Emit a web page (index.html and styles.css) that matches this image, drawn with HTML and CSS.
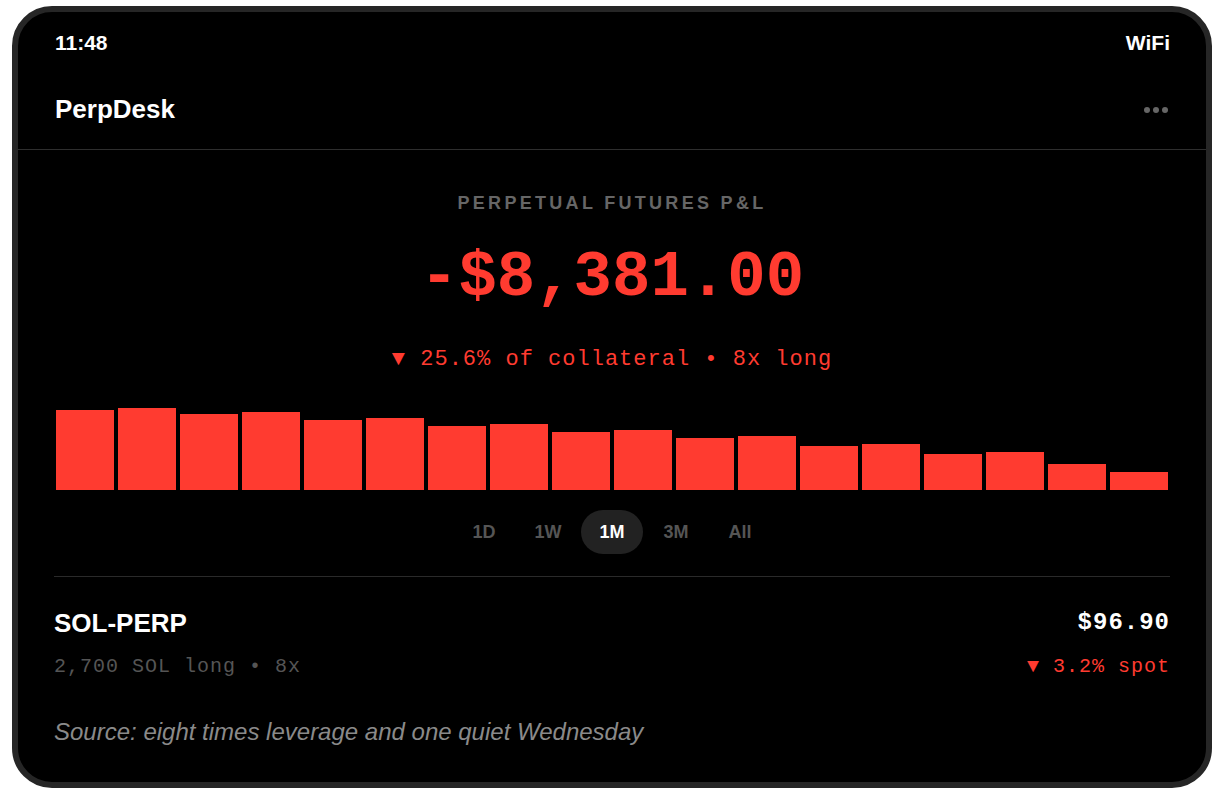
FILE: index.html
```html
<!DOCTYPE html>
<html lang="en">
<head>
    <meta charset="UTF-8">
    <meta name="viewport" content="width=device-width, initial-scale=1.0">
    <title>PerpDesk</title>
    <link rel="stylesheet" href="styles.css">
</head>
<body>
    <div class="device">
        <div class="status-bar">
            <span>11:48</span>
            <span>WiFi</span>
        </div>

        <header class="app-header">
            <h1>PerpDesk</h1>
            <div class="more" aria-label="More">
                <span></span><span></span><span></span>
            </div>
        </header>

        <main class="content">
            <section class="pnl">
                <div class="pnl-label">PERPETUAL FUTURES P&amp;L</div>
                <div class="pnl-value">-$8,381.00</div>
                <div class="pnl-sub">▼ 25.6% of collateral • 8x long</div>
            </section>

            <div class="chart">
                <div class="bar" style="height: 80px"></div>
                <div class="bar" style="height: 82px"></div>
                <div class="bar" style="height: 76px"></div>
                <div class="bar" style="height: 78px"></div>
                <div class="bar" style="height: 70px"></div>
                <div class="bar" style="height: 72px"></div>
                <div class="bar" style="height: 64px"></div>
                <div class="bar" style="height: 66px"></div>
                <div class="bar" style="height: 58px"></div>
                <div class="bar" style="height: 60px"></div>
                <div class="bar" style="height: 52px"></div>
                <div class="bar" style="height: 54px"></div>
                <div class="bar" style="height: 44px"></div>
                <div class="bar" style="height: 46px"></div>
                <div class="bar" style="height: 36px"></div>
                <div class="bar" style="height: 38px"></div>
                <div class="bar" style="height: 26px"></div>
                <div class="bar" style="height: 18px"></div>
            </div>

            <nav class="ranges">
                <button class="range">1D</button>
                <button class="range">1W</button>
                <button class="range active">1M</button>
                <button class="range">3M</button>
                <button class="range">All</button>
            </nav>

            <div class="position">
                <div class="position-row">
                    <div class="symbol">SOL-PERP</div>
                    <div class="price">$96.90</div>
                </div>
                <div class="position-row">
                    <div class="size">2,700 SOL long • 8x</div>
                    <div class="change">▼ 3.2% spot</div>
                </div>
            </div>

            <p class="source">Source: eight times leverage and one quiet Wednesday</p>
        </main>
    </div>
</body>
</html>
```

FILE: styles.css
```css
body {
    margin: 0;
    padding: 6px 10px 0 12px;
    background-color: #ffffff;
    font-family: "Liberation Sans", Arial, sans-serif;
}
.device {
    height: 782px;
    box-sizing: border-box;
    border: 6px solid #262626;
    border-radius: 40px;
    background: #000000;
    color: #ffffff;
    overflow: hidden;
}
.status-bar {
    display: flex;
    justify-content: space-between;
    height: 58px;
    box-sizing: border-box;
    padding: 19px 36px 0 37px;
    font-size: 21px;
    line-height: 24px;
    font-weight: bold;
}
.app-header {
    display: flex;
    justify-content: space-between;
    align-items: center;
    height: 80px;
    box-sizing: border-box;
    padding: 0 38px 0 37px;
    border-bottom: 1px solid #2e2e2e;
}
.app-header h1 {
    margin: 0;
    font-size: 26px;
    font-weight: bold;
}
.more {
    display: flex;
    gap: 3px;
}
.more span {
    width: 6px;
    height: 6px;
    border-radius: 50%;
    background: #666666;
}
.content {
    padding: 0 36px;
}
.pnl {
    text-align: center;
    padding-top: 42px;
}
.pnl-label {
    color: #666666;
    font-size: 18px;
    line-height: 22px;
    font-weight: bold;
    letter-spacing: 3.3px;
}
.pnl-value {
    margin-top: 28px;
    color: #ff3b30;
    font-family: "Liberation Mono", "Courier New", monospace;
    font-size: 64px;
    line-height: 72px;
    font-weight: bold;
}
.pnl-sub {
    margin-top: 32px;
    color: #ff3b30;
    font-family: "Liberation Mono", "Courier New", monospace;
    font-size: 22px;
    line-height: 28px;
    letter-spacing: 1px;
}
.chart {
    display: flex;
    align-items: flex-end;
    gap: 4px;
    height: 82px;
    margin-top: 34px;
    padding: 0 2px;
}
.bar {
    flex: 1;
    background: #ff3b30;
}
.ranges {
    display: flex;
    justify-content: center;
    gap: 2px;
    margin-top: 20px;
    padding-bottom: 22px;
    border-bottom: 1px solid #2a2a2a;
}
.range {
    width: 62px;
    height: 44px;
    padding: 0;
    border: none;
    border-radius: 22px;
    background: transparent;
    color: #555555;
    font-family: "Liberation Sans", Arial, sans-serif;
    font-size: 18px;
    font-weight: bold;
    cursor: pointer;
}
.range.active {
    background: #222222;
    color: #ffffff;
}
.position {
    padding-top: 31px;
}
.position-row {
    display: flex;
    justify-content: space-between;
    align-items: center;
}
.symbol {
    font-size: 26px;
    line-height: 30px;
    font-weight: bold;
}
.price {
    font-family: "Liberation Mono", "Courier New", monospace;
    font-size: 24px;
    line-height: 30px;
    font-weight: bold;
    letter-spacing: 1px;
}
.size, .change {
    margin-top: 17px;
    font-family: "Liberation Mono", "Courier New", monospace;
    font-size: 20px;
    line-height: 24px;
    letter-spacing: 1px;
}
.size {
    color: #555555;
}
.change {
    color: #ff3b30;
}
.source {
    margin: 39px 0 0;
    color: #8a8a8a;
    font-size: 24px;
    line-height: 28px;
    font-style: italic;
}
```
